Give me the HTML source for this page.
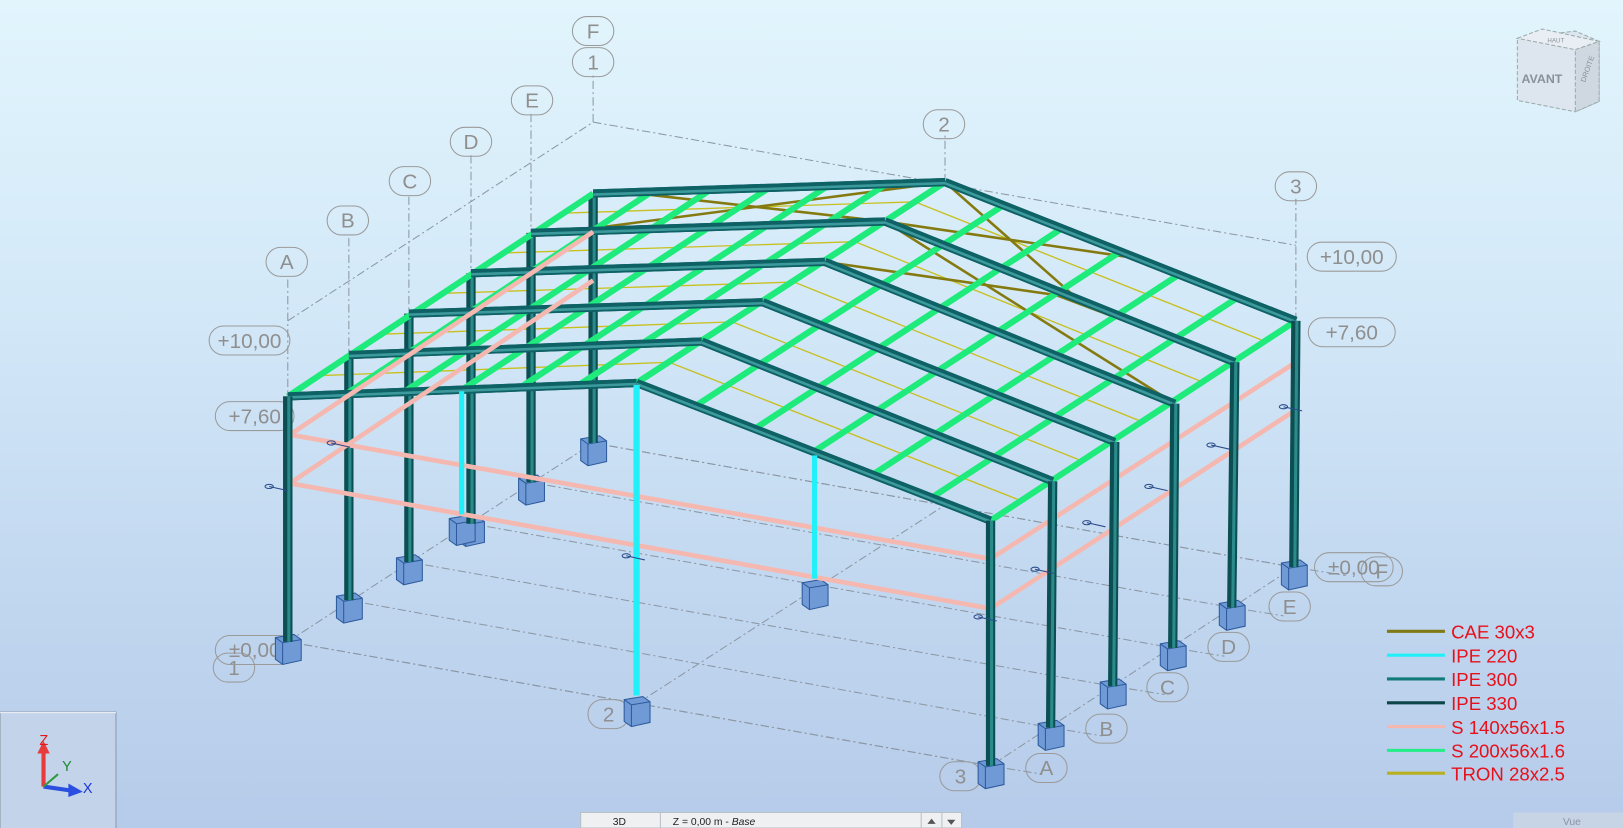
<!DOCTYPE html>
<html><head><meta charset="utf-8">
<style>
html,body{margin:0;padding:0;width:1623px;height:828px;overflow:hidden;}
body{background:linear-gradient(to bottom,#e2f5fd 0%,#d4e9f8 35%,#c2d8f0 70%,#b5cbe9 100%);font-family:"Liberation Sans",sans-serif;}
svg{position:absolute;left:0;top:0;}
</style></head><body>
<svg id="s" width="1623" height="828" viewBox="0 0 1568 800" xmlns="http://www.w3.org/2000/svg">
<g id="grid" stroke="#8c97a3" stroke-width="1" stroke-dasharray="8,3,2,3" fill="none"></g>
<g id="lab" fill="none" stroke="#9a9a9a" stroke-width="1"></g>
<g id="str"></g>
<g>
<polygon points="1466,37 1522,30 1545,40 1545,98 1522,108 1466,97" fill="#dde6ee" stroke="#9aa" stroke-dasharray="4,2"/>
<polygon points="1466,37 1490,28 1545,40 1522,48" fill="#e8eef3" stroke="#9aa" stroke-dasharray="4,2"/>
<polygon points="1522,48 1545,40 1545,98 1522,108" fill="#cfd8e0" stroke="#9aa" stroke-dasharray="4,2"/>
<text x="1470" y="80" font-size="12" fill="#8a9098" font-weight="bold">AVANT</text>
<text x="1495" y="41" font-size="6" fill="#8a9098">HAUT</text>
<text x="1526" y="78" font-size="7" fill="#8a9098" transform="rotate(-70 1530 75)">DROITE</text>
</g>
<g font-size="18" fill="#e8101a">
<line x1="1340" y1="610" x2="1396" y2="610" stroke="#7f7a15" stroke-width="3"/>
<line x1="1340" y1="633" x2="1396" y2="633" stroke="#1ef0f8" stroke-width="3"/>
<line x1="1340" y1="656" x2="1396" y2="656" stroke="#137a7a" stroke-width="3"/>
<line x1="1340" y1="679" x2="1396" y2="679" stroke="#0b4548" stroke-width="3"/>
<line x1="1340" y1="702" x2="1396" y2="702" stroke="#f4b8b0" stroke-width="3"/>
<line x1="1340" y1="725" x2="1396" y2="725" stroke="#22ee88" stroke-width="3"/>
<line x1="1340" y1="747" x2="1396" y2="747" stroke="#b8b020" stroke-width="3"/>
<text x="1402" y="617">CAE 30x3</text>
<text x="1402" y="640">IPE 220</text>
<text x="1402" y="663">IPE 300</text>
<text x="1402" y="686">IPE 330</text>
<text x="1402" y="709">S 140x56x1.5</text>
<text x="1402" y="732">S 200x56x1.6</text>
<text x="1402" y="754">TRON 28x2.5</text>
</g>
<rect x="0" y="688" width="112" height="115" fill="#c3d4ea" stroke="#8e9aa8"/>
<line x1="0" y1="688.5" x2="112" y2="688.5" stroke="#f4f8fc"/>
<line x1="42" y1="760" x2="42" y2="725" stroke="#e83a3a" stroke-width="4"/>
<polygon points="36,728 48,728 42,716" fill="#e83a3a"/>
<line x1="42" y1="760" x2="70" y2="764" stroke="#2a4ee0" stroke-width="4"/>
<polygon points="66,757 80,765 66,770" fill="#2a4ee0"/>
<line x1="42" y1="760" x2="56" y2="748" stroke="#2e9a40" stroke-width="2"/>
<text x="38" y="720" fill="#e01818" font-size="14">Z</text>
<text x="60" y="745" fill="#1c8a2c" font-size="14">Y</text>
<text x="80" y="766" fill="#1b36d8" font-size="14">X</text>
<rect x="561" y="785" width="368" height="15" fill="#eef0f2" stroke="#b8c0c8"/>
<line x1="638" y1="785" x2="638" y2="800" stroke="#b8c0c8"/>
<line x1="890" y1="785" x2="890" y2="800" stroke="#b8c0c8"/>
<line x1="910" y1="785" x2="910" y2="800" stroke="#b8c0c8"/>
<text x="592" y="797" font-size="10" fill="#222">3D</text>
<text x="650" y="797" font-size="10" fill="#222">Z = 0,00 m - <tspan font-style="italic">Base</tspan></text>
<polygon points="896,796 904,796 900,791" fill="#555"/>
<polygon points="915,792 923,792 919,797" fill="#555"/>
<rect x="1462" y="785" width="106" height="15" fill="#c7d4e6"/>
<text x="1510" y="797" font-size="10" fill="#8a95a3">Vue</text>
</svg>
<script>
var NS="http://www.w3.org/2000/svg";
function el(p,t,a,txt){var e=document.createElementNS(NS,t);for(var k in a)e.setAttribute(k,a[k]);if(txt!=null)e.textContent=txt;document.getElementById(p).appendChild(e);return e;}
function L(p,a,b,c,w,extra){var o={x1:a[0],y1:a[1],x2:b[0],y2:b[1],stroke:c,"stroke-width":w,"stroke-linecap":"butt"};if(extra)for(var k in extra)o[k]=extra[k];return el(p,"line",o);}
function lerp(a,b,t){return [a[0]+(b[0]-a[0])*t,a[1]+(b[1]-a[1])*t];}
var F=[
 {le:[278,383],r:[615,370],re:[957,503],lb:[278,620],rb:[957,740]},
 {le:[337,343],r:[678,330],re:[1017,465],lb:[337,580],rb:[1015,703]},
 {le:[395,303],r:[737,292],re:[1077,427],lb:[395,543],rb:[1075,663]},
 {le:[455,264],r:[797,253],re:[1135,390],lb:[455,506],rb:[1133,626]},
 {le:[513,225],r:[855,214],re:[1193,350],lb:[513,466],rb:[1190,587]},
 {le:[573,187],r:[913,176],re:[1252,310],lb:[573,428],rb:[1250,548]}];
var g="grid";
L(g,[278,620],[573,428],"#8c97a3",1);L(g,[957,740],[1250,548],"#8c97a3",1);
L(g,[278,620],[957,740],"#8c97a3",1);L(g,[573,428],[1250,548],"#8c97a3",1);
L(g,[615,680],[913,488],"#8c97a3",1);
for(var i=0;i<6;i++){L(g,F[i].lb,F[i].rb,"#8c97a3",1);L(g,F[i].rb,[F[i].rb[0]+50,F[i].rb[1]+8],"#8c97a3",1);}
L(g,[278,310],[573,118],"#8c97a3",1);L(g,[573,118],[1252,237],"#8c97a3",1);
L(g,[573,118],[573,70],"#8c97a3",1);L(g,[913,176],[913,130],"#8c97a3",1);L(g,[1252,310],[1252,192],"#8c97a3",1);
[[278,270],[337,230],[395,190],[455,150],[513,110]].forEach(function(p,i){L(g,p,F[i].le,"#8c97a3",1);});
L(g,[278,640],[278,620],"#8c97a3",1);L(g,[615,690],[615,680],"#8c97a3",1);L(g,[957,750],[957,740],"#8c97a3",1);
function lab(x,y,t,w){w=w||40;el("lab","rect",{x:x-w/2,y:y-14,width:w,height:28,rx:14,ry:14});el("lab","text",{x:x,y:y+7,"text-anchor":"middle","font-size":20,fill:"#8f8f8f",stroke:"none"},t);}
lab(573,30,"F");lab(573,60,"1");lab(514,97,"E");lab(455,137,"D");lab(396,175,"C");lab(336,213,"B");lab(277,253,"A");
lab(912,120,"2");lab(1252,180,"3");lab(241,329,"+10,00",78);lab(246,402,"+7,60",76);
lab(1306,248,"+10,00",86);lab(1306,321,"+7,60",84);lab(1335,552,"F");lab(1308,548,"±0,00",76);
lab(1246,586,"E");lab(1187,625,"D");lab(1128,664,"C");lab(1069,704,"B");lab(1011,742,"A");lab(928,750,"3");lab(588,690,"2");
lab(226,645,"1");lab(246,628,"±0,00",76);
var s="str";
function found(p){var x=p[0],y=p[1];el(s,"polygon",{points:(x-12)+","+(y-4)+" "+(x+6)+","+(y-7)+" "+(x+13)+","+(y-2)+" "+(x+13)+","+(y+18)+" "+(x-5)+","+(y+22)+" "+(x-12)+","+(y+17),fill:"#6f9ad6",stroke:"#2c5a9c","stroke-width":1});el(s,"polyline",{points:(x-12)+","+(y-4)+" "+(x-5)+","+(y+1)+" "+(x+13)+","+(y-2),fill:"none",stroke:"#2c5a9c","stroke-width":1});L(s,[x-5,y+1],[x-5,y+22],"#2c5a9c",1);}
function col(a,b){L(s,a,b,"#0c4f52",9);L(s,[a[0]+1,a[1]],[b[0]+1,b[1]],"#2a8a8c",3);}
function raf(a,b){L(s,a,b,"#0e6266",8);L(s,[a[0],a[1]+1],[b[0],b[1]+1],"#3d9a9c",2.5);}
for(var i=5;i>=0;i--){found(F[i].lb);}
found([615,680]);found([446,505]);found([787,567]);
for(var i=5;i>=0;i--){found(F[i].rb);}
for(var i=0;i<5;i++){var a=F[i],b=F[i+1];
 [0.5].forEach(function(t){var le=lerp(a.le,b.le,t),r=lerp(a.r,b.r,t),re=lerp(a.re,b.re,t);L(s,le,r,"#c8c020",1.3);L(s,r,re,"#c8c020",1.3);});}
var E=F[4],D=F[3],Ff=F[5];
L(s,lerp(Ff.le,Ff.r,0.1),E.r,"#847a10",2.5);L(s,lerp(E.le,E.r,0.1),Ff.r,"#847a10",2.5);
L(s,E.r,D.re,"#847a10",2.5);L(s,D.r,[1020,285],"#847a10",2.5);L(s,[1020,285],E.re,"#847a10",2.5);
L(s,Ff.r,lerp(E.r,E.re,0.55),"#847a10",2.5);L(s,E.r,lerp(Ff.r,Ff.re,0.55),"#847a10",2.5);
for(var i=5;i>=0;i--){var f=F[i];col(f.le,f.lb);raf(f.le,f.r);raf(f.r,f.re);}
for(var k=0;k<=6;k++){var t=k/6;
 var p0=lerp(F[0].le,F[0].r,t),p1=lerp(F[5].le,F[5].r,t);L(s,p0,p1,"#1fea7c",6);
 var q0=lerp(F[0].r,F[0].re,t),q1=lerp(F[5].r,F[5].re,t);L(s,q0,q1,"#1fea7c",6);}
for(var i=5;i>=0;i--){var f=F[i];raf(f.r,f.re);raf(f.le,f.r);}
function pk(a,b){L(s,a,b,"#f5b8b0",4.5);}
pk([280,420],[573,224]);pk([280,467],[573,271]);
pk([280,420],[957,540]);pk([280,467],[957,588]);
pk([957,540],[1252,350]);pk([957,588],[1252,396]);
for(var i=5;i>=0;i--){col(F[i].re,F[i].rb);}
L(s,[615,372],[615,672],"#22f0f8",6);L(s,[446,378],[446,497],"#22f0f8",5);L(s,[787,440],[787,559],"#22f0f8",5);
col(F[0].le,F[0].lb);
[[320,428],[260,470],[1000,550],[1050,505],[1110,470],[1170,430],[1240,393],[605,537],[945,596]].forEach(function(p){L(s,p,[p[0]+18,p[1]+4],"#2a4a8a",1);el(s,"ellipse",{cx:p[0],cy:p[1],rx:4,ry:2,fill:"none",stroke:"#2a4a8a","stroke-width":1});});
</script>
</body></html>
